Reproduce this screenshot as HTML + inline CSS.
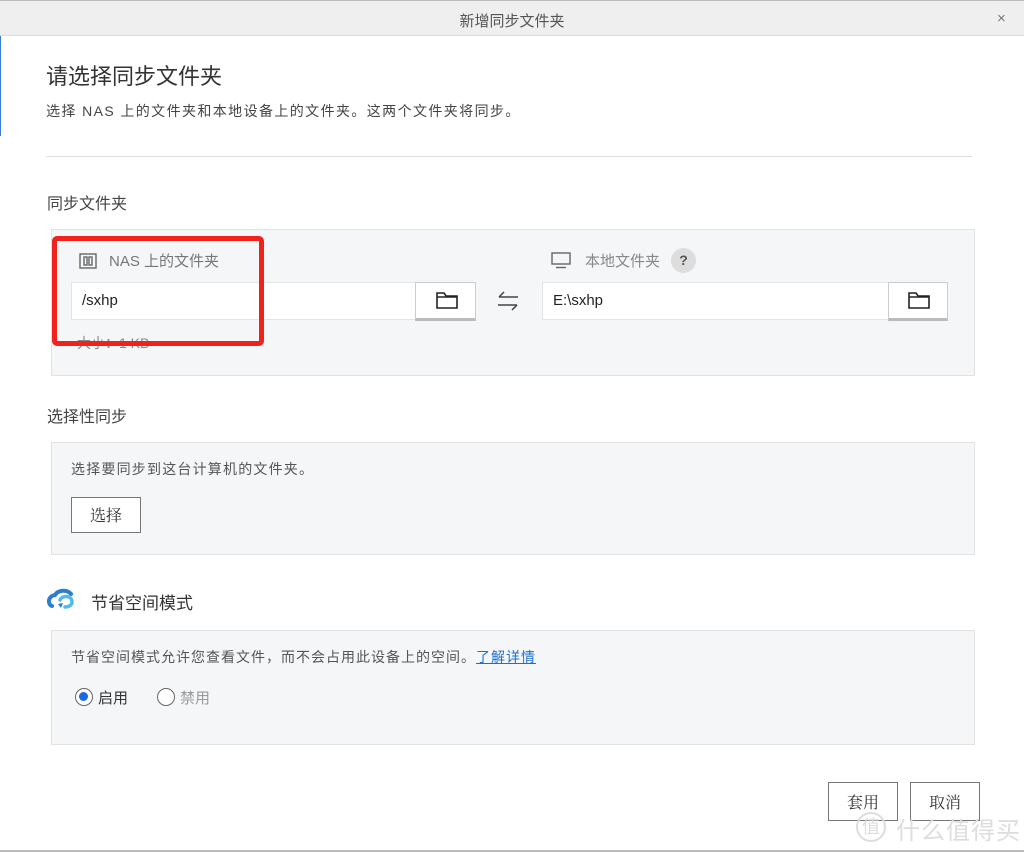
<!DOCTYPE html>
<html><head><meta charset="utf-8"><style>
*{margin:0;padding:0;box-sizing:border-box}
body{width:1024px;height:852px;background:#fff;font-family:"Liberation Sans","Noto Sans CJK SC",sans-serif;color:#333;position:relative;overflow:hidden}
.a{position:absolute;white-space:nowrap}
.panel{position:absolute;left:51px;width:924px;background:#f5f6f8;border:1px solid #e2e2e2}
.inp{position:absolute;height:38px;background:#fff;border:1px solid #e4e4e4;font-size:15px;color:#222;padding:9px 10px}
.fb{position:absolute;height:39px;background:#fff;border:1px solid #ccc;border-bottom:3px solid #bbb}
.btn{position:absolute;border:1px solid #777;background:#fff;font-size:16px;text-align:center;font-family:"Noto Serif CJK SC",serif;color:#333}
</style></head><body>
<div class="a" style="left:0;top:0;width:1024px;height:36px;background:#efefef;border-top:1px solid #bbb;border-bottom:1px solid #ddd"></div>
<div class="a" style="left:0;top:10px;width:1024px;text-align:center;font-size:15px;color:#555">新增同步文件夹</div>
<div class="a" style="left:997px;top:10px;font-size:15px;color:#777">×</div>
<div class="a" style="left:0;top:36px;width:1px;height:100px;background:#3a7bd5"></div>
<div class="a" style="left:46px;top:59px;font-size:22px;color:#333">请选择同步文件夹</div>
<div class="a" style="left:46px;top:101px;font-size:14px;color:#444;letter-spacing:1.4px">选择 NAS 上的文件夹和本地设备上的文件夹。这两个文件夹将同步。</div>
<div class="a" style="left:46px;top:156px;width:926px;height:1px;background:#ddd"></div>
<div class="a" style="left:47px;top:190px;font-size:16px;color:#444">同步文件夹</div>

<div class="panel" style="top:229px;height:147px"></div>
<svg class="a" style="left:79px;top:252px" width="18" height="18" viewBox="0 0 18 18" fill="none" stroke="#666" stroke-width="1.4"><rect x="1" y="2" width="16" height="14"/><rect x="5" y="5" width="3" height="8"/><rect x="10" y="5" width="3" height="8"/></svg>
<div class="a" style="left:109px;top:250px;font-size:15px;color:#777">NAS 上的文件夹</div>
<div class="inp" style="left:71px;top:282px;width:345px">/sxhp</div>
<div class="fb" style="left:415px;top:282px;width:61px"></div>
<svg class="a" style="left:436px;top:291px" width="22" height="18" viewBox="0 0 22 18" fill="none" stroke="#222" stroke-width="1.6"><path d="M1 2h7l2 3h11v12H1z"/><path d="M1 6h20"/></svg>
<svg class="a" style="left:496px;top:290px" width="24" height="22" viewBox="0 0 24 22" fill="none" stroke="#444" stroke-width="1.5"><path d="M3 7h19M3 7l5-5M21 15H2M21 15l-5 5"/></svg>
<div class="a" style="left:77px;top:333px;font-size:14px;color:#888">大小：1 KB</div>
<svg class="a" style="left:551px;top:252px" width="20" height="17" viewBox="0 0 20 17" fill="none" stroke="#666" stroke-width="1.4"><rect x="1" y="1" width="18" height="11"/><path d="M5 15.5h10"/></svg>
<div class="a" style="left:585px;top:250px;font-size:15px;color:#888">本地文件夹</div>
<div class="a" style="left:671px;top:248px;width:25px;height:25px;border-radius:50%;background:#ddd;color:#555;font-size:14px;font-weight:bold;text-align:center;line-height:25px">?</div>
<div class="inp" style="left:542px;top:282px;width:347px">E:\sxhp</div>
<div class="fb" style="left:888px;top:282px;width:60px"></div>
<svg class="a" style="left:908px;top:291px" width="22" height="18" viewBox="0 0 22 18" fill="none" stroke="#222" stroke-width="1.6"><path d="M1 2h7l2 3h11v12H1z"/><path d="M1 6h20"/></svg>
<div class="a" style="left:52px;top:236px;width:212px;height:110px;border:5px solid #f0231c;border-radius:5px"></div>

<div class="a" style="left:47px;top:403px;font-size:16px;color:#444">选择性同步</div>
<div class="panel" style="top:442px;height:113px"></div>
<div class="a" style="left:71px;top:459px;font-size:14px;color:#555;letter-spacing:1.2px">选择要同步到这台计算机的文件夹。</div>
<div class="btn" style="left:71px;top:497px;width:70px;height:36px;line-height:34px">选择</div>

<svg class="a" style="left:46px;top:588px" width="32" height="24" viewBox="0 0 32 24"><path d="M6 18c-5-2-4-10 3-11 3-5 12-6 16-1" fill="none" stroke="#2a7fd0" stroke-width="4" stroke-linecap="round"/><path d="M14 12c2-5 12-5 12 2 0 3-3 5-7 5" fill="none" stroke="#55b8ea" stroke-width="3.5" stroke-linecap="round"/><path d="M12 16l5-1-2 5" fill="#2a7fd0"/></svg>
<div class="a" style="left:91px;top:589px;font-size:17px;color:#333">节省空间模式</div>
<div class="panel" style="top:630px;height:115px"></div>
<div class="a" style="left:71px;top:647px;font-size:14px;color:#555;letter-spacing:1px">节省空间模式允许您查看文件，而不会占用此设备上的空间。<span style="color:#1a6fd6;text-decoration:underline">了解详情</span></div>
<div class="a" style="left:75px;top:688px;width:18px;height:18px;border:1.5px solid #666;border-radius:50%;background:#fff"><div style="margin:3px;width:9px;height:9px;border-radius:50%;background:#1d6ae0"></div></div>
<div class="a" style="left:98px;top:687px;font-size:15px;color:#333">启用</div>
<div class="a" style="left:157px;top:688px;width:18px;height:18px;border:1.5px solid #666;border-radius:50%;background:#fff"></div>
<div class="a" style="left:180px;top:687px;font-size:15px;color:#999">禁用</div>

<div class="btn" style="left:828px;top:782px;width:70px;height:39px;line-height:37px">套用</div>
<div class="btn" style="left:910px;top:782px;width:70px;height:39px;line-height:37px">取消</div>
<div class="a" style="left:856px;top:812px;width:30px;height:30px;border-radius:50%;border:2px solid #ddd;color:#ddd;font-size:18px;text-align:center;line-height:26px">值</div>
<div class="a" style="left:896px;top:811px;font-size:24px;color:#ddd;letter-spacing:1px">什么值得买</div>
<div class="a" style="left:0;top:850px;width:1024px;height:2px;background:#bbb"></div>
</body></html>
